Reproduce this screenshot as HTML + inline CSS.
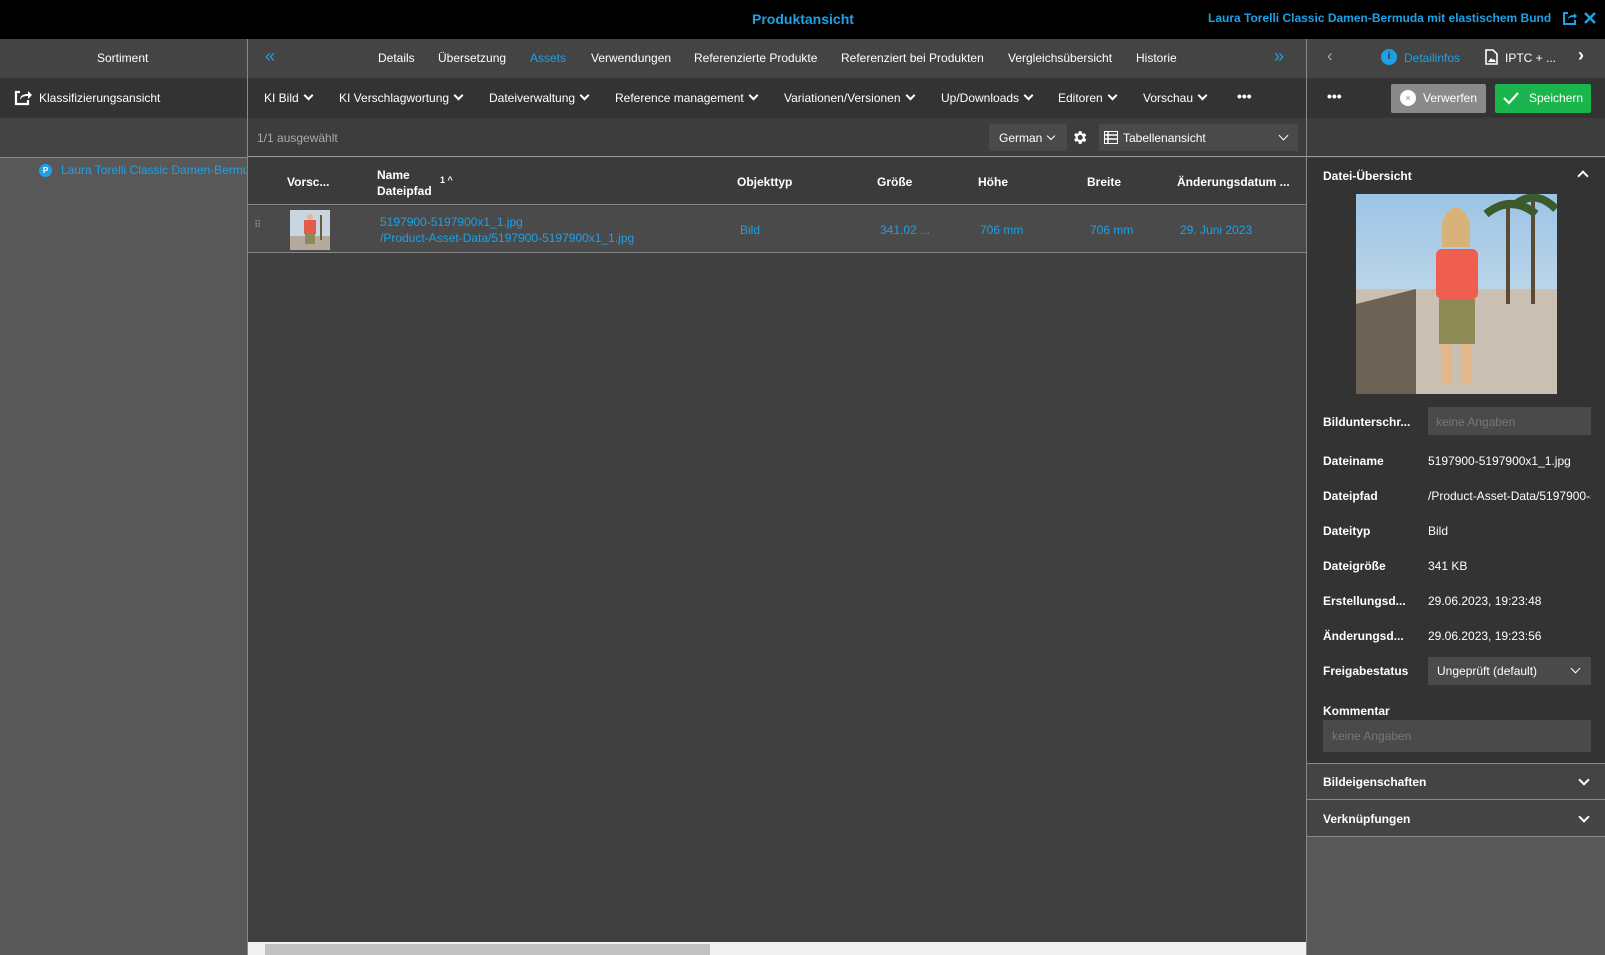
<!DOCTYPE html>
<html><head><meta charset="utf-8"><style>
*{margin:0;padding:0;box-sizing:border-box}
body{width:1605px;height:955px;overflow:hidden;background:#404040;font-family:"Liberation Sans",Arial,sans-serif;font-size:12px;color:#fff;position:relative}
.a{position:absolute;white-space:nowrap}
.b{font-weight:bold}
.blue{color:#1ea0e6}
.chev{display:inline-block;width:7px;height:7px;border-right:2px solid #fff;border-bottom:2px solid #fff;transform:rotate(45deg);margin-left:6px;position:relative;top:-3px}
.lbl{position:absolute;left:1323px;font-weight:bold;font-size:12px}
.val{position:absolute;left:1428px;font-size:12px}
</style></head><body>
<div class="a" style="left:0;top:0;width:1605px;height:39px;background:#000"></div>
<div class="a b blue" style="left:752px;top:11px;font-size:14px">Produktansicht</div>
<div class="a b blue" style="left:1208px;top:11px;font-size:12px">Laura Torelli Classic Damen-Bermuda mit elastischem Bund</div>
<svg class="a" style="left:1563px;top:11px" width="14" height="14" viewBox="0 0 14 14"><path d="M5 2H1v11h11V9" fill="none" stroke="#1ea0e6" stroke-width="2"/><path d="M5 9c0-4 3-5 6-5V2l3 3-3 3V6c-2 0-5 0-6 3z" fill="#1ea0e6"/></svg>
<svg class="a" style="left:1584px;top:12px" width="12" height="12" viewBox="0 0 12 12"><path d="M1 1l10 10M11 1L1 11" stroke="#1ea0e6" stroke-width="2.5"/></svg>

<div class="a" style="left:0;top:39px;width:247px;height:39px;background:#444"></div>
<div class="a" style="left:0;top:78px;width:247px;height:40px;background:#333"></div>
<div class="a" style="left:0;top:118px;width:247px;height:39px;background:#444"></div>
<div class="a" style="left:0;top:157px;width:247px;height:798px;background:#585858;border-top:1px solid #888"></div>
<div class="a" style="left:97px;top:51px">Sortiment</div>
<svg class="a" style="left:14px;top:89px" width="18" height="17" viewBox="0 0 18 17"><path d="M6 3H2v12h12v-4" fill="none" stroke="#fff" stroke-width="2.2"/><path d="M6 11c0-5 4-6 8-6V2l4 4-4 4V7c-3 0-6 0-8 4z" fill="#fff"/></svg>
<div class="a" style="left:39px;top:91px">Klassifizierungsansicht</div>
<div class="a" style="left:39px;top:164px;width:13px;height:13px;border-radius:50%;background:#1ea0e6;color:#fff;font-size:8px;font-weight:bold;text-align:center;line-height:13px">P</div>
<div class="a blue" style="left:61px;top:163px;width:186px;overflow:hidden">Laura Torelli Classic Damen-Bermuda</div>
<div class="a" style="left:247px;top:39px;width:1px;height:916px;background:#888"></div>

<div class="a" style="left:248px;top:39px;width:1059px;height:39px;background:#444"></div>
<div class="a" style="left:248px;top:78px;width:1059px;height:40px;background:#333"></div>
<div class="a" style="left:248px;top:118px;width:1059px;height:39px;background:#3d3d3d;border-bottom:1px solid #999"></div>
<div class="a blue" style="left:265px;top:46px;font-size:18px">«</div>
<div class="a" style="left:378px;top:51px">Details</div>
<div class="a" style="left:438px;top:51px">Übersetzung</div>
<div class="a blue" style="left:530px;top:51px">Assets</div>
<div class="a" style="left:591px;top:51px">Verwendungen</div>
<div class="a" style="left:694px;top:51px">Referenzierte Produkte</div>
<div class="a" style="left:841px;top:51px">Referenziert bei Produkten</div>
<div class="a" style="left:1008px;top:51px">Vergleichsübersicht</div>
<div class="a" style="left:1136px;top:51px">Historie</div>
<div class="a blue" style="left:1274px;top:46px;font-size:18px">»</div>

<div class="a" style="left:264px;top:91px">KI Bild<span class="chev"></span></div>
<div class="a" style="left:339px;top:91px">KI Verschlagwortung<span class="chev"></span></div>
<div class="a" style="left:489px;top:91px">Dateiverwaltung<span class="chev"></span></div>
<div class="a" style="left:615px;top:91px">Reference management<span class="chev"></span></div>
<div class="a" style="left:784px;top:91px">Variationen/Versionen<span class="chev"></span></div>
<div class="a" style="left:941px;top:91px">Up/Downloads<span class="chev"></span></div>
<div class="a" style="left:1058px;top:91px">Editoren<span class="chev"></span></div>
<div class="a" style="left:1143px;top:91px">Vorschau<span class="chev"></span></div>
<div class="a b" style="left:1237px;top:88px;font-size:14px">•••</div>

<div class="a" style="left:257px;top:131px;color:#aaa">1/1 ausgewählt</div>
<div class="a" style="left:989px;top:124px;width:78px;height:27px;background:#4a4a4a;padding:7px 0 0 10px">German<span class="chev" style="width:6px;height:6px;border-width:1.5px"></span></div>
<svg class="a" style="left:1071px;top:129px" width="17" height="17" viewBox="0 0 24 24"><path fill="#fff" d="M19.4 13a7.5 7.5 0 000-2l2.1-1.6-2-3.5-2.5 1a7.6 7.6 0 00-1.7-1L15 3h-4l-.4 2.7a7.6 7.6 0 00-1.7 1l-2.5-1-2 3.5L6.6 11a7.5 7.5 0 000 2l-2.2 1.6 2 3.5 2.5-1a7.6 7.6 0 001.7 1L11 21h4l.4-2.7a7.6 7.6 0 001.7-1l2.5 1 2-3.5zM13 15.5a3.5 3.5 0 110-7 3.5 3.5 0 010 7z"/></svg>
<div class="a" style="left:1099px;top:124px;width:199px;height:27px;background:#4a4a4a"></div>
<svg class="a" style="left:1104px;top:131px" width="14" height="13" viewBox="0 0 14 13"><rect x="0.5" y="0.5" width="13" height="12" fill="none" stroke="#fff"/><path d="M0 4h14M0 8h14M4 0v13" stroke="#fff" stroke-width="1.5"/></svg>
<div class="a" style="left:1123px;top:131px">Tabellenansicht</div>
<span class="a" style="left:1280px;top:132px;width:7px;height:7px;border-right:1.5px solid #fff;border-bottom:1.5px solid #fff;transform:rotate(45deg)"></span>

<div class="a" style="left:248px;top:158px;width:1058px;height:47px;background:#3b3b3b;border-bottom:1px solid #888"></div>
<div class="a b" style="left:287px;top:175px">Vorsc...</div>
<div class="a b" style="left:377px;top:167px;line-height:16px">Name<br>Dateipfad</div>
<div class="a b" style="left:440px;top:175px;font-size:9px">1 ^</div>
<div class="a b" style="left:737px;top:175px">Objekttyp</div>
<div class="a b" style="left:877px;top:175px">Größe</div>
<div class="a b" style="left:978px;top:175px">Höhe</div>
<div class="a b" style="left:1087px;top:175px">Breite</div>
<div class="a b" style="left:1177px;top:175px">Änderungsdatum ...</div>
<div class="a" style="left:248px;top:206px;width:1058px;height:47px;background:#4a4a4a;border-bottom:1px solid #888"></div>
<div class="a" style="left:254px;top:224px;color:#999;font-size:10px;line-height:4px">⠿</div>
<svg class="a" style="left:290px;top:210px" width="40" height="40" viewBox="0 0 40 40"><rect width="40" height="40" fill="#c9d6e2"/><rect y="26" width="40" height="14" fill="#b5aa9c"/><rect x="14" y="10" width="12" height="14" fill="#e45b4a"/><rect x="15" y="24" width="10" height="10" fill="#8b8a5a"/><circle cx="20" cy="7" r="3" fill="#e2b98e"/><rect x="30" y="5" width="2" height="25" fill="#6a5a3e"/></svg>
<div class="a blue" style="left:380px;top:215px">5197900-5197900x1_1.jpg</div>
<div class="a blue" style="left:380px;top:231px">/Product-Asset-Data/5197900-5197900x1_1.jpg</div>
<div class="a blue" style="left:740px;top:223px">Bild</div>
<div class="a blue" style="left:880px;top:223px">341.02 ...</div>
<div class="a blue" style="left:980px;top:223px">706 mm</div>
<div class="a blue" style="left:1090px;top:223px">706 mm</div>
<div class="a blue" style="left:1180px;top:223px">29. Juni 2023</div>
<div class="a" style="left:248px;top:942px;width:1058px;height:13px;background:#f1f1f1"></div>
<div class="a" style="left:265px;top:944px;width:445px;height:11px;background:#c1c1c1"></div>
<div class="a" style="left:1306px;top:39px;width:1px;height:916px;background:#888"></div>

<div class="a" style="left:1307px;top:39px;width:298px;height:39px;background:#444"></div>
<div class="a" style="left:1307px;top:78px;width:298px;height:40px;background:#333"></div>
<div class="a" style="left:1307px;top:118px;width:298px;height:39px;background:#3d3d3d;border-bottom:1px solid #999"></div>
<div class="a" style="left:1307px;top:158px;width:298px;height:605px;background:#333"></div>
<div class="a" style="left:1307px;top:763px;width:298px;height:192px;background:#585858"></div>
<div class="a" style="left:1307px;top:763px;width:298px;height:37px;background:#444;border-top:1px solid #888;border-bottom:1px solid #888"></div>
<div class="a" style="left:1307px;top:800px;width:298px;height:37px;background:#444;border-bottom:1px solid #888"></div>

<div class="a" style="left:1327px;top:46px;color:#aaa;font-size:17px">‹</div>
<div class="a" style="left:1381px;top:49px;width:16px;height:16px;border-radius:50%;background:#1ea0e6;color:#333;font-size:10px;font-weight:bold;text-align:center;line-height:16px">i</div>
<div class="a blue" style="left:1404px;top:51px">Detailinfos</div>
<svg class="a" style="left:1485px;top:49px" width="13" height="16" viewBox="0 0 13 16"><path d="M1 1h7l4 4v10H1z" fill="none" stroke="#fff" stroke-width="1.6"/><path d="M3 13l3-4 2 2 1-1 2 3z" fill="#fff"/></svg>
<div class="a" style="left:1505px;top:51px">IPTC + ...</div>
<div class="a b" style="left:1578px;top:45px;font-size:18px">›</div>
<div class="a b" style="left:1327px;top:88px;font-size:14px">•••</div>
<div class="a" style="left:1391px;top:84px;width:95px;height:29px;background:#8a8a8a;border-radius:2px"></div>
<div class="a" style="left:1400px;top:90px;width:16px;height:16px;border-radius:50%;background:#fff;color:#888;font-size:9px;text-align:center;line-height:16px">×</div>
<div class="a" style="left:1423px;top:91px">Verwerfen</div>
<div class="a" style="left:1495px;top:84px;width:96px;height:29px;background:#1ab54c;border-radius:2px"></div>
<svg class="a" style="left:1503px;top:91px" width="16" height="14" viewBox="0 0 16 14"><path d="M1 7l5 5L15 2" fill="none" stroke="#fff" stroke-width="2.2"/></svg>
<div class="a" style="left:1529px;top:91px">Speichern</div>

<div class="a b" style="left:1323px;top:169px">Datei-Übersicht</div>
<span class="a" style="left:1579px;top:172px;width:8px;height:8px;border-left:2px solid #fff;border-top:2px solid #fff;transform:rotate(45deg)"></span>
<svg class="a" style="left:1356px;top:194px" width="201" height="200" viewBox="0 0 201 200"><defs><linearGradient id="s" x1="0" y1="0" x2="0" y2="1"><stop offset="0" stop-color="#9cc4e4"/><stop offset="1" stop-color="#dbe7ef"/></linearGradient></defs><rect width="201" height="200" fill="url(#s)"/><rect y="95" width="201" height="105" fill="#c9bfb2"/><path d="M0 110L60 95v105H0z" fill="#6d6256"/><rect x="150" y="10" width="4" height="100" fill="#5b4a34"/><rect x="175" y="0" width="4" height="110" fill="#5b4a34"/><path d="M130 20q25-20 50 0M160 10q20-15 40 5" stroke="#3c5a2c" stroke-width="8" fill="none"/><circle cx="100" cy="30" r="14" fill="#e8c291"/><path d="M86 28q14-30 28 0v25H86z" fill="#d9b27a"/><rect x="80" y="55" width="42" height="50" rx="6" fill="#ef5e4e"/><rect x="83" y="105" width="36" height="45" fill="#8d8b55"/><rect x="86" y="150" width="10" height="40" fill="#e2b78c"/><rect x="106" y="150" width="10" height="40" fill="#e2b78c"/></svg>

<div class="lbl" style="top:415px">Bildunterschr...</div>
<div class="a" style="left:1428px;top:407px;width:163px;height:28px;background:#4a4a4a;color:#777;padding:8px 0 0 8px">keine Angaben</div>
<div class="lbl" style="top:454px">Dateiname</div><div class="val" style="top:454px">5197900-5197900x1_1.jpg</div>
<div class="lbl" style="top:489px">Dateipfad</div><div class="val" style="top:489px;width:163px;overflow:hidden;white-space:nowrap">/Product-Asset-Data/5197900-5197900x1_1.jpg</div>
<div class="lbl" style="top:524px">Dateityp</div><div class="val" style="top:524px">Bild</div>
<div class="lbl" style="top:559px">Dateigröße</div><div class="val" style="top:559px">341 KB</div>
<div class="lbl" style="top:594px">Erstellungsd...</div><div class="val" style="top:594px">29.06.2023, 19:23:48</div>
<div class="lbl" style="top:629px">Änderungsd...</div><div class="val" style="top:629px">29.06.2023, 19:23:56</div>
<div class="lbl" style="top:664px">Freigabestatus</div>
<div class="a" style="left:1428px;top:657px;width:163px;height:28px;background:#4a4a4a;padding:7px 0 0 9px">Ungeprüft (default)</div>
<span class="a" style="left:1572px;top:665px;width:7px;height:7px;border-right:1.5px solid #fff;border-bottom:1.5px solid #fff;transform:rotate(45deg)"></span>
<div class="lbl" style="top:704px">Kommentar</div>
<div class="a" style="left:1323px;top:720px;width:268px;height:32px;background:#4a4a4a;color:#777;padding:9px 0 0 9px">keine Angaben</div>

<div class="lbl" style="top:775px">Bildeigenschaften</div>
<span class="a" style="left:1580px;top:776px;width:8px;height:8px;border-right:2px solid #fff;border-bottom:2px solid #fff;transform:rotate(45deg)"></span>
<div class="lbl" style="top:812px">Verknüpfungen</div>
<span class="a" style="left:1580px;top:813px;width:8px;height:8px;border-right:2px solid #fff;border-bottom:2px solid #fff;transform:rotate(45deg)"></span>
</body></html>
